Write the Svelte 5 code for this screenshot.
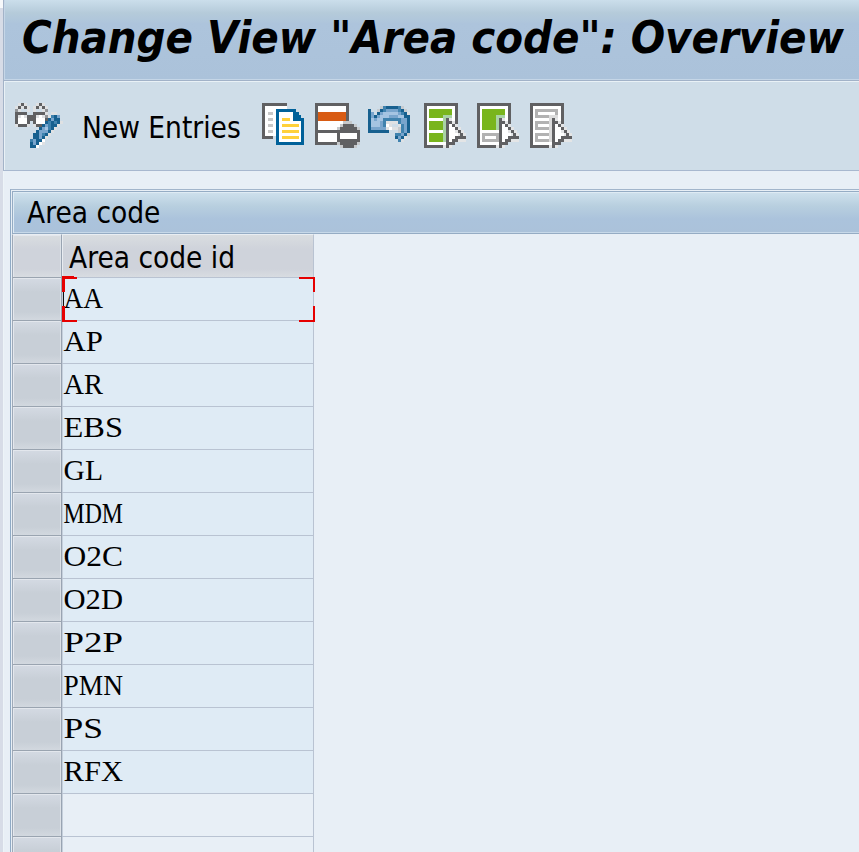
<script>
  const rows = ['AA', 'AP', 'AR', 'EBS', 'GL', 'MDM', 'O2C', 'O2D', 'P2P', 'PMN', 'PS', 'RFX', '', ''];

  const colours = {
    D: '#606062', g: '#919396', l: '#c6cbd0', w: '#ffffff', e: '#dfe1e3',
    B: '#17608f', b: '#3f82ae', s: '#79a5cd', p: '#a5c4e2'
  };

  // Shaded glyphs: one character per 3px cell, '.' is transparent.
  const glasses = [
    '.eDe...eDe......',
    'eDeDe.eDeDe.....',
    'ge..e.e..eg.....',
    'DDDD..DDDDe.ee..',
    'DeweDDDewegebBs.',
    'DwwwDDDwwwDBsBB.',
    'DwwwD.DwwwBbBbBe',
    'eDDDe.eDDBsbBBe.',
    '........BspbBe..',
    '.......BsssBe...',
    '......BBsbBe....',
    '......BBsBe.....',
    '.....bsBBw......',
    '.....BsBwe......',
    '.....BBw........'
  ];
  const undo = [
    '....lbBBBBbl..',
    'B..lBbssssbBl.',
    'Bs.BspppppsbBe',
    'BsBspppsssppBB',
    'BpsppbbbbbbssB',
    'BpppsbeeeebssB',
    'Bpppsbwe..ebsB',
    'BssssseweelbsB',
    'BBBBBBB...lbsB',
    '.........bbsBl',
    '.........BsBe.',
    '..........be..'
  ];
</script>

{#snippet pixels(map, left)}
  {#each map as line, y}
    {#each line.split('') as ch, x}
      {#if colours[ch]}<rect x={left + x * 3} y={y * 3} width="3" height="3" fill={colours[ch]} />{/if}
    {/each}
  {/each}
{/snippet}

{#snippet hollow(y, w)}
  <rect x="5" {y} width={w} height="9" fill="#b2b2b2" />
  <rect x="8" y={y + 3} width={w - 6} height="3" fill="#fff" />
{/snippet}

{#snippet page(kind)}
  <svg width="42" height="45" viewBox="0 0 42 45" role="img" aria-label={kind}>
    <path fill="#606062" d="M0 0H34V45H0z" />
    <path fill="#fff" d="M3 3H31V42H3z" />
    {#if kind === 'select all'}
      <path fill="#79b51c" d="M5 6H28V15H5zM5 18H22V27H5zM5 30H22V39H5z" />
    {:else if kind === 'select block'}
      <path fill="#79b51c" d="M5 6H28V27H5z" />
      {@render hollow(30, 17)}
    {:else}
      {@render hollow(6, 23)}
      {@render hollow(18, 17)}
      {@render hollow(30, 17)}
    {/if}
    <path fill={kind === 'deselect' ? '#dcdcdc' : '#a9d3a4'} d="M19 12H28V15H22V{kind === 'select block' ? 27 : 39}H19z" />
    <path fill="#cfdde8" d="M31 21H34V45H25V42H31z" />
    <path fill="#e4e5e6" d="M25 15H28V18H31V21H34V24H37V27H40V30H42V39H31V42H28V45H19V42H22V15z" />
    <path fill="#fff" d="M25 21H28V24H31V30H34V33H34V36H28V39H25z" />
    <path fill="#606062" d="M22 15H25V18H28V21H31V24H34V27H37V30H39V33H42V36H34V39H31V42H25V45H22zM25 21V39H28V36H31V33H36V30H34V27H31V24H28V21z" fill-rule="evenodd" />
    <path fill="#606062" d="M0 42H19V45H0z" />
  </svg>
{/snippet}

<div class="screen">
  <div class="gutter"></div>
  <main>
    <header><h1>Change View "Area code": Overview</h1></header>
    <nav>
      <button class="toggle">
        <svg width="48" height="45" viewBox="0 0 48 45" role="img" aria-label="display or change">{@render pixels(glasses, 0)}</svg>
      </button>
      <button class="new">New Entries</button>
      <div class="icons">
        <button>
          <svg width="42" height="45" viewBox="0 0 42 45" role="img" aria-label="copy">
            <path fill="#606062" d="M0 0H25V6H11V36H0z" />
            <path fill="#fff" d="M3 3H25V6H14V33H3z" />
            <path fill="#c8c8c8" d="M6 9H11V12H6zM6 15H11V18H6zM6 21H11V24H6zM6 27H11V30H6z" />
            <path fill="#00619a" d="M14 6H34V9H37V12H39V15H42V42H14z" />
            <path fill="#fff" d="M17 9H31V18H39V39H17z" />
            <path fill="#ffd13b" d="M20 15H28V18H20zM20 21H37V24H20zM20 27H37V30H20zM20 33H37V36H20z" />
          </svg>
        </button>
        <button>
          <svg width="45" height="45" viewBox="0 0 45 45" role="img" aria-label="delete">
            <path fill="#606062" d="M0 0H34V42H0z" />
            <path fill="#fff" d="M3 3H31V9H3zM3 18H31V27H3zM3 30H31V39H3z" />
            <path fill="#d85b13" d="M3 9H31V18H3z" />
            <path fill="#cfdde8" d="M31 30H34V42H31z" />
            <path fill="#c6c8ca" d="M28 18H37V21H42V24H45V42H42V45H25V42H22V24H25V21H28z" />
            <path fill="#606062" d="M28 21H39V24H42V27H45V39H42V42H39V45H28V42H25V39H22V27H25V24H28z" />
            <path fill="#fff" d="M25 30H42V36H25z" />
          </svg>
        </button>
        <button class="undo">
          <svg width="42" height="45" viewBox="0 -3 42 45" role="img" aria-label="undo">{@render pixels(undo, 0)}</svg>
        </button>
        <button>{@render page('select all')}</button>
        <button>{@render page('select block')}</button>
        <button>{@render page('deselect')}</button>
      </div>
    </nav>
    <section>
      <div class="panel">
        <h2>Area code</h2>
        <div class="table">
          <div class="row head"><div class="sel"></div><div class="cell">Area code id</div></div>
          {#each rows as value, i}
            <div class="row">
              <div class="sel"></div>
              <div class="cell" class:empty={!value}>
                {#if value}
                  <svg class="value" width="120" height="42" viewBox="0 0 120 42">
                    <text x="1.5" y="30" textLength={value.length * 20 - 0.5} lengthAdjust="spacingAndGlyphs">{value}</text>
                  </svg>
                {/if}
                {#if i === 0}
                  <svg class="focus" width="253" height="46" viewBox="0 0 253 46" fill="none" stroke="#e60000">
                    <path d="M1.5 16V0M1.5 30V46" stroke-width="3" />
                    <path d="M0 1H12M3 2H15M0 45H15M237 2H253M237 45H253" stroke-width="2" />
                    <path d="M252 1V16M252 30V46" stroke-width="2" />
                    <path d="M1.5 16V30" stroke="#111" stroke-width="1" />
                  </svg>
                {/if}
              </div>
            </div>
          {/each}
        </div>
      </div>
    </section>
  </main>
</div>

<style>
  :global(body) { background: #e8eff6; overflow: hidden; }
  .screen {
    display: flex; width: 859px; height: 852px; overflow: hidden;
    color: #000; background: #e8eff6;
    font-family: "DejaVu Sans Condensed", "DejaVu Sans", sans-serif;
    font-stretch: condensed;
  }
  .gutter { flex: none; width: 3px; background: linear-gradient(#f7f9fb 8px, #d7dce7 8px); }
  main { flex: 1; min-width: 0; }
  h1, h2 { margin: 0; white-space: nowrap; }
  button { padding: 0; border: 0; background: none; font: inherit; color: inherit; display: block; }
  header {
    box-sizing: border-box; height: 81px; padding-left: 18px;
    border-left: 1px solid #a3b3c8; border-bottom: 1px solid #a2b2c8;
    background: linear-gradient(#cbdeeb, #b5cbda 13px, #adc4dc 24px, #abc2da);
    box-shadow: inset 1px -1px #c5d6e7;
  }
  h1 { font-size: 45px; line-height: 76px; font-style: italic; font-weight: 700; letter-spacing: -0.03px; }
  nav {
    box-sizing: border-box; height: 90px; display: flex; align-items: flex-start;
    border-left: 1px solid #a3b3c8; border-bottom: 1px solid #a8b8cf;
    background: #cfdde8; box-shadow: inset 1px 1px #e9f1f6; padding: 22px 0 0 11px;
  }
  nav svg { display: block; shape-rendering: crispEdges; }
  .toggle { width: 67px; height: 45px; }
  .new { width: 180px; font-size: 29.5px; line-height: 51px; text-align: left; white-space: nowrap; }
  .icons { display: flex; gap: 11px; }
  .undo { width: 45px; margin-left: -3px; }
  section { padding: 18px 0 0 7px; height: 663px; box-shadow: inset 1px 0 #edf4f8; }
  .panel { height: 663px; border-left: 1px solid #8faac5; border-top: 1px solid #a2b5cb; padding: 1px 0 0 1px; }
  h2 {
    box-sizing: border-box; height: 43px; padding-left: 14px; font-weight: 400; font-size: 29.5px; line-height: 42px;
    border: 1px solid #95acc4; border-right: 0;
    background: linear-gradient(#cfe1ed, #b8cfdf 14px, #abc3dc 27px, #abc2da);
    box-shadow: inset 1px 1px #dfebf4, inset 0 -1px #c7d9e9;
  }
  .row { display: flex; width: 302px; height: 43px; }
  .sel {
    box-sizing: border-box; width: 50px; height: 43px;
    border-left: 1px solid #9faab8; border-right: 1px solid #99a4b2; border-bottom: 1px solid #9aa4b0;
    background: linear-gradient(#d4dae3, #c8cfd7 14px, #c8cfd7 34px, #d2d8df);
    box-shadow: inset 1px 1px #e3e7ed, inset -1px 0 #dce1e7;
  }
  .cell {
    position: relative; box-sizing: border-box; width: 252px; height: 43px;
    border-right: 1px solid #b9c3d2; border-bottom: 1px solid #b9c3d2;
    background: #dfebf5; box-shadow: inset 1px 0 #c6d0dc; white-space: nowrap;
  }
  .value { display: block; font-family: "Liberation Serif", serif; font-size: 30px; }
  .cell.empty { background: #e8eff6; }
  .head { height: 44px; }
  .head .sel, .head .cell {
    height: 44px; border-top: 1px solid #e9eef3;
    background: linear-gradient(#d9dde0, #cfd3db 14px, #cfd3db 34px, #d8dce1);
  }
  .head .cell { padding-left: 7px; font-size: 29.5px; line-height: 47px; box-shadow: inset 1px 0 #e8ecf1; }
  .focus { position: absolute; left: 0; top: -2px; z-index: 1; }
</style>
